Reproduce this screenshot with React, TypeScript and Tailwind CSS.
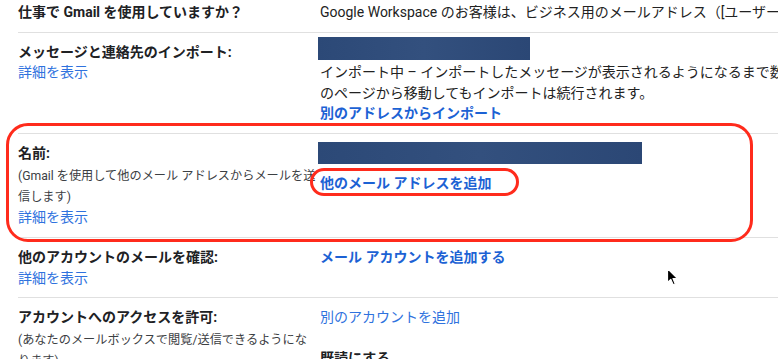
import React from 'react'

const link = 'text-[#2f72de]'
const boldLink = 'font-bold text-[#1c62d4]'

const Row = ({ label, right, last, children }: { label: React.ReactNode; right: React.ReactNode; last?: boolean; children?: React.ReactNode }) => {
  return (
    <div className={`relative ml-[18px] flex ${last ? '' : 'border-b border-[#e0e0e0]'}`}>
      <div className='w-[300px] shrink-0 pt-[9px] pb-[9px] pr-[6px] leading-[21px]'>{label}</div>
      <div className='min-w-0 flex-1'>{right}</div>
      {children}
    </div>
  )
}

const Redacted = ({ className }: { className: string }) => (
  <div className={`bg-gradient-to-r from-[#2c4977] via-[#33507e] to-[#2b4775] ${className}`} />
)

const Cursor = () => (
  <svg className='absolute left-[666px] top-[267px]' width='14' height='20' viewBox='0 0 14 20'>
    <path d='M1.5 1.5 L1.5 15.5 L4.8 12.4 L7.2 17.8 L9.3 16.9 L7 11.6 L11.5 11.6 Z' fill='#000' stroke='#fff' strokeWidth='1.2' strokeLinejoin='round' />
  </svg>
)

export default function App() {
  return (
    <div className="relative h-[359px] w-[778px] overflow-hidden bg-white font-[Roboto,'Noto_Sans_CJK_JP',sans-serif] text-[14px] text-[#202124]">
      <div className='-mt-[7px]'>
        <Row
          label={<div className='font-bold'>仕事で Gmail を使用していますか？</div>}
          right={
            <div className='whitespace-nowrap pt-[9px] pl-[2px] leading-[21px] text-[#222]'>
              Google Workspace のお客様は、ビジネス用のメールアドレス（[ユーザー名]@yourcompany.com）を使用できます。
            </div>
          }
        />

        <Row
          label={
            <>
              <div className='font-bold'>メッセージと連絡先のインポート:</div>
              <div className={`${link} leading-[19px]`}>詳細を表示</div>
            </>
          }
          right={
            <div className='pt-[4px] pb-[11px]'>
              <Redacted className='h-[23px] w-[212px]' />
              <div className='mt-[2px] whitespace-nowrap pl-[2px] leading-[21px] text-[#222]'>
                <div>インポート中 – インポートしたメッセージが表示されるようになるまで数時間かかる場合があります。こ</div>
                <div>のページから移動してもインポートは続行されます。</div>
              </div>
              <div className={`${boldLink} pl-[2px] leading-[18px]`}>別のアドレスからインポート</div>
            </div>
          }
        />

        <Row
          label={
            <>
              <div className='font-bold'>名前:</div>
              <div className='whitespace-nowrap pt-[2px] text-[12.2px] text-[#3c4043]'>
                <div>(Gmail を使用して他のメール アドレスからメールを送</div>
                <div>信します)</div>
              </div>
              <div className={`${link} -mt-[1px]`}>詳細を表示</div>
            </>
          }
          right={
            <div className='pt-[8px]'>
              <Redacted className='h-[22px] w-[324px]' />
              <div className='mt-[9px] pl-[2px] leading-[21px]'>
                <span className={`relative inline-block ${boldLink}`}>
                  他のメール アドレスを追加
                  <span className='absolute -top-[5px] -bottom-[2px] -left-[10px] -right-[28px] rounded-full border-[3px] border-[#ff2b1c]' />
                </span>
              </div>
            </div>
          }
        >
          <div className='pointer-events-none absolute -left-[12px] -top-[11px] h-[119px] w-[747px] rounded-[22px] border-[3px] border-[#ff2b1c]' />
        </Row>

        <Row
          label={
            <>
              <div className='font-bold'>他のアカウントのメールを確認:</div>
              <div className={`${link} leading-[20px]`}>詳細を表示</div>
            </>
          }
          right={<div className={`${boldLink} pt-[9px] pl-[2px] leading-[21px]`}>メール アカウントを追加する</div>}
        />

        <Row
          last
          label={
            <>
              <div className='font-bold'>アカウントへのアクセスを許可:</div>
              <div className='whitespace-nowrap pt-[2px] text-[12.2px] text-[#3c4043]'>
                <div>(あなたのメールボックスで閲覧/送信できるようにな</div>
                <div>ります)</div>
              </div>
            </>
          }
          right={
            <div className='pt-[9px] pl-[2px] leading-[21px]'>
              <div className={link}>別のアカウントを追加</div>
              <div className='mt-[20px] font-bold'>既読にする</div>
            </div>
          }
        />
      </div>
      <Cursor />
    </div>
  )
}
